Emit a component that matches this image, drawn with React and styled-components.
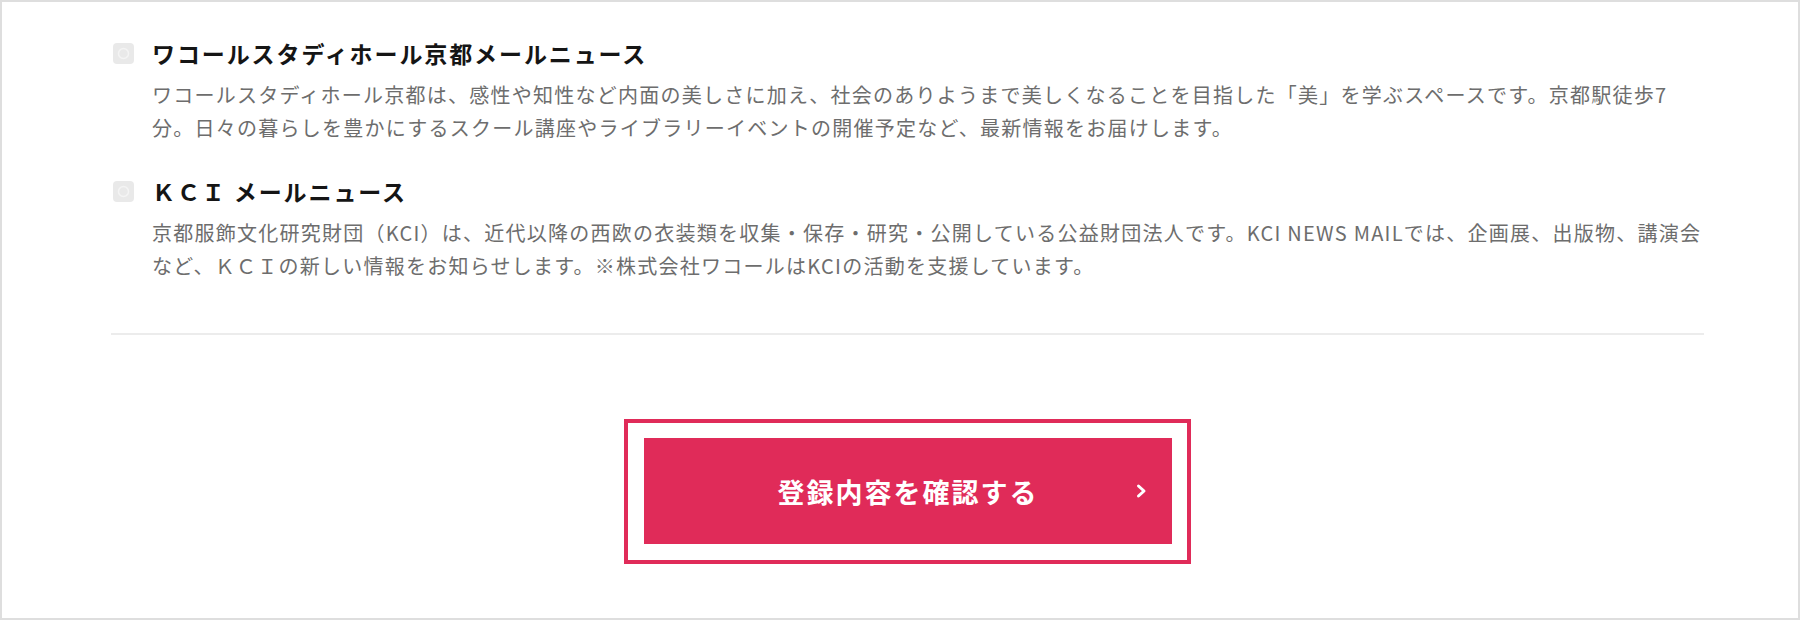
import React from "react";
import styled, { createGlobalStyle } from "styled-components";

const GlobalStyle = createGlobalStyle`
  html, body {
    margin: 0;
    padding: 0;
    background: #fff;
  }

  body {
    font-family: "Noto Sans CJK JP", "Noto Sans", sans-serif;
  }
`;

const Frame = styled.div`
  width: 1800px;
  height: 620px;
  box-sizing: border-box;
  border: 2px solid #dedede;
  padding: 36px 94px 0 109px;
  background: #fff;
  overflow: hidden;
`;

const NewsList = styled.div`
  display: flex;
  flex-direction: column;
  gap: 32px;
  padding-left: 2px;
`;

const NewsItem = styled.label`
  display: grid;
  grid-template-columns: 21px 1fr;
  column-gap: 18px;
  row-gap: 10px;
  align-items: center;
`;

const CheckBox = styled.span`
  width: 21px;
  height: 21px;
  border-radius: 4px;
  background: #e9e9e9;
  display: grid;
  place-items: center;
`;

const Heading = styled.span`
  font-size: 23px;
  font-weight: 700;
  line-height: 30px;
  letter-spacing: 1.9px;
  color: #151515;
`;

const Description = styled.p`
  grid-column: 2;
  margin: 0;
  font-size: 20px;
  line-height: 33px;
  letter-spacing: 1.25px;
  color: #6d6d6d;
  white-space: nowrap;
`;

const Divider = styled.hr`
  margin: 51px 0 0;
  border: none;
  border-top: 2px solid #ececec;
`;

const ButtonArea = styled.div`
  display: flex;
  justify-content: center;
  margin-top: 84px;
`;

const ButtonFrame = styled.div`
  border: 4px solid #e02b59;
  padding: 15px 15px 16px 16px;
`;

const SubmitButton = styled.button`
  position: relative;
  width: 528px;
  height: 106px;
  border: none;
  background: #e02b59;
  color: #fff;
  font-family: inherit;
  font-size: 27px;
  font-weight: 700;
  letter-spacing: 2px;
  cursor: pointer;
`;

const Chevron = styled.svg`
  position: absolute;
  right: 25px;
  top: 50%;
  transform: translateY(-50%);
`;

const CheckIcon = () => (
  <svg width="13" height="13" viewBox="0 0 13 13">
    <circle cx="6.5" cy="6.5" r="5" fill="none" stroke="#f4f4f4" strokeWidth="1.5" />
  </svg>
);

const items = [
  {
    title: "ワコールスタディホール京都メールニュース",
    lines: [
      "ワコールスタディホール京都は、感性や知性など内面の美しさに加え、社会のありようまで美しくなることを目指した「美」を学ぶスペースです。京都駅徒歩7",
      "分。日々の暮らしを豊かにするスクール講座やライブラリーイベントの開催予定など、最新情報をお届けします。",
    ],
  },
  {
    title: "ＫＣＩ メールニュース",
    lines: [
      "京都服飾文化研究財団（KCI）は、近代以降の西欧の衣装類を収集・保存・研究・公開している公益財団法人です。KCI NEWS MAILでは、企画展、出版物、講演会",
      "など、ＫＣＩの新しい情報をお知らせします。※株式会社ワコールはKCIの活動を支援しています。",
    ],
  },
];

export default function App() {
  return (
    <>
      <GlobalStyle />
      <Frame>
        <NewsList>
          {items.map((item) => (
            <NewsItem key={item.title}>
              <CheckBox>
                <CheckIcon />
              </CheckBox>
              <Heading>{item.title}</Heading>
              <Description>
                {item.lines[0]}
                <br />
                {item.lines[1]}
              </Description>
            </NewsItem>
          ))}
        </NewsList>
        <Divider />
        <ButtonArea>
          <ButtonFrame>
            <SubmitButton type="button">
              登録内容を確認する
              <Chevron width="11" height="15" viewBox="0 0 11 15">
                <polyline
                  points="2.5,2.5 8,7.5 2.5,12.5"
                  fill="none"
                  stroke="#fff"
                  strokeWidth="3"
                  strokeLinecap="round"
                  strokeLinejoin="round"
                />
              </Chevron>
            </SubmitButton>
          </ButtonFrame>
        </ButtonArea>
      </Frame>
    </>
  );
}
